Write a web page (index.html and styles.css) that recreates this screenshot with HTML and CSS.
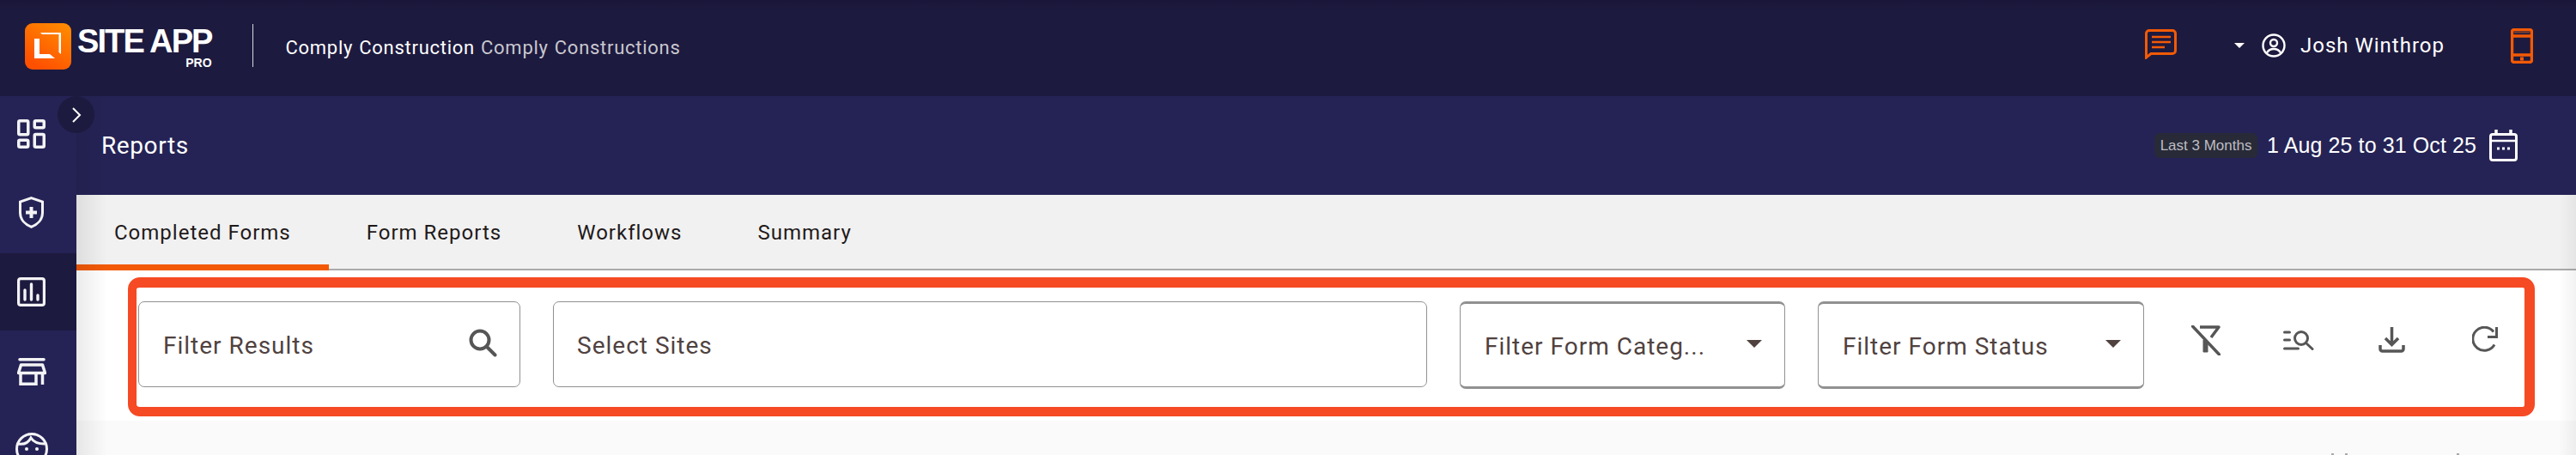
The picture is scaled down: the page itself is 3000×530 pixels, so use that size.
FILE: index.html
```html
<!DOCTYPE html>
<html lang="en">
<head>
<meta charset="utf-8">
<title>Reports</title>
<link rel="stylesheet" href="styles.css">
</head>
<body>
<header class="topbar">
  <div class="logo">
    <svg class="logo-mark" viewBox="0 0 54 54">
      <defs><linearGradient id="lg" x1="1" y1="0" x2="0.4" y2="1"><stop offset="0" stop-color="#ff8f00"/><stop offset="1" stop-color="#ff5000"/></linearGradient></defs>
      <rect width="54" height="54" rx="9" fill="url(#lg)"/>
      <path d="M11 18h6v18h12l6 5H11z" fill="#fff"/>
      <path d="M18 11h24v25l-2.500-2V13H20z" fill="#fff"/>
    </svg>
    <div class="logo-text"><span class="logo-name">SITE APP</span><span class="logo-pro">PRO</span></div>
  </div>
  <div class="divider"></div>
  <div class="company"><span class="company-main">Comply Construction</span> <span class="company-sub">Comply Constructions</span></div>
  <div class="top-right">
    <svg class="ic-chat" viewBox="0 0 37 35" fill="none" stroke="#f25a06"><path d="M5 1.500h27a3.500 3.500 0 0 1 3.500 3.500v20a3.500 3.500 0 0 1-3.500 3.500H7L1.500 33V5A3.500 3.500 0 0 1 5 1.500z" stroke-width="3"/><path d="M8 9h22M8 15h22M8 21h15" stroke-width="2.500"/></svg>
    <span class="caret-white"></span>
    <svg class="ic-user" viewBox="0 0 28 28" fill="none" stroke="#fff" stroke-width="2.400"><circle cx="14" cy="14" r="12.500"/><circle cx="14" cy="11" r="4"/><path d="M6 22.500c2-3.500 5-4.500 8-4.500s6 1 8 4.500"/></svg>
    <span class="user-name">Josh Winthrop</span>
    <svg class="ic-phone" viewBox="0 0 26 41" fill="none" stroke="#f25a06"><rect x="1.500" y="1.500" width="23" height="38" rx="2.500" stroke-width="3.500"/><path d="M2 9h22M2 31h22" stroke-width="3.500"/><path d="M4 4.500h18" stroke="#7a4030" stroke-width="2"/><rect x="11" y="33.500" width="4" height="4" fill="#f25a06" stroke="none"/></svg>
  </div>
</header>
<div class="body-row">
  <nav class="sidebar">
    <div class="side-item side-first">
      <svg class="ic-side" viewBox="0 0 33 34" fill="none" stroke="#f3f3f5" stroke-width="3.500"><rect x="1.750" y="1.750" width="11" height="16" rx="1.500"/><rect x="20.250" y="1.750" width="11" height="8" rx="1.500"/><rect x="1.750" y="24.250" width="11" height="8" rx="1.500"/><rect x="20.250" y="17.500" width="11" height="14.750" rx="1.500"/></svg>
    </div>
    <div class="side-item">
      <svg class="ic-shield" viewBox="0 0 29 37" fill="none" stroke="#f3f3f5" stroke-width="3"><path d="M14.500 1.700 27.500 6v13c0 7.500-5.500 13.500-13 16.300C7 32.500 1.500 26.500 1.500 19V6z"/><path d="M14.500 12v13M8 18.500h13" stroke-width="4"/></svg>
    </div>
    <div class="side-item side-active">
      <svg class="ic-side" viewBox="0 0 33 34" fill="none" stroke="#f3f3f5" stroke-width="3.200"><rect x="1.600" y="1.600" width="29.800" height="30.800" rx="2.500"/><path d="M9 15v11M16.500 8v18M24 21v5" stroke-width="3.400" stroke-linecap="round"/></svg>
    </div>
    <div class="side-item">
      <svg class="ic-store" viewBox="0 0 34 32" fill="none" stroke="#f3f3f5" stroke-width="3.500"><path d="M3 1.750h28" stroke-linecap="round"/><path d="M4.500 8h25l3 9.500h-31z" stroke-linejoin="round"/><path d="M4 18v12.250h18V18M29.500 18v13"/></svg>
    </div>
    <div class="side-item">
      <svg class="ic-face" viewBox="0 0 38 38" fill="none" stroke="#f3f3f5" stroke-width="3"><circle cx="19" cy="19" r="17.500"/><path d="M3 13c6 1 12-1 15-7 3 5 8 7 16 7"/><circle cx="13" cy="19" r="2" fill="#f3f3f5" stroke="none"/><circle cx="25" cy="19" r="2" fill="#f3f3f5" stroke="none"/></svg>
    </div>
  </nav>
  <main class="content">
    <button class="expand" type="button" aria-label="Expand"><svg viewBox="0 0 12 20" fill="none" stroke="#fff" stroke-width="2"><path d="M2 2l8 8-8 8"/></svg></button>
    <section class="subbar">
      <h1 class="page-title">Reports</h1>
      <div class="range">
        <span class="badge">Last 3 Months</span>
        <span class="dates">1 Aug 25 to 31 Oct 25</span>
        <svg class="ic-cal" viewBox="0 0 33 37" fill="none" stroke="#fff" stroke-width="3"><rect x="1.500" y="5.500" width="30" height="30" rx="2.500"/><path d="M2 13h29" stroke-width="2.500"/><path d="M8 0v5M25 0v5" stroke-width="3.500"/><path d="M9 22h3M15 22h3M21 22h3" stroke-width="3"/></svg>
      </div>
    </section>
    <section class="tabs">
      <div class="tab tab-active">Completed Forms</div>
      <div class="tab">Form Reports</div>
      <div class="tab">Workflows</div>
      <div class="tab">Summary</div>
    </section>
    <section class="filter-band">
      <div class="filter-box">
        <div class="control c-search"><span>Filter Results</span>
          <svg class="ic-search" viewBox="0 0 33 33" fill="none" stroke="#565656"><circle cx="13" cy="13" r="10.500" stroke-width="4"/><path d="M20.500 20.500l10 10" stroke-width="4" stroke-linecap="round"/></svg>
        </div>
        <div class="control c-sites"><span>Select Sites</span></div>
        <div class="control c-select c-cat"><span>Filter Form Categ...</span><i class="caret"></i></div>
        <div class="control c-select c-status"><span>Filter Form Status</span><i class="caret"></i></div>
        <div class="actions">
          <svg class="act-filter" viewBox="0 0 34 35" fill="none" stroke="#565656"><path d="M10 2h22l-9 12" stroke-width="3.500" stroke-linejoin="round"/><path d="M14 17v14h5v-9z" fill="#565656" stroke-width="1"/><path d="M1.500 1l31 33" stroke-width="3.500" stroke-linecap="round"/></svg>
          <svg class="act-list" viewBox="0 0 36 24" fill="none" stroke="#565656" stroke-width="3" stroke-linecap="round"><path d="M1.500 3h6M1.500 12h6M1.500 22h16"/><circle cx="21" cy="10" r="7.500"/><path d="M26.500 15.500l7.500 7"/></svg>
          <svg class="act-down" viewBox="0 0 31 31" fill="none" stroke="#565656" stroke-width="3.500"><path d="M15.500 1v20M8 14l7.500 7.500L23 14"/><path d="M2 22v4.500a2.500 2.500 0 0 0 2.500 2.500h22a2.500 2.500 0 0 0 2.500-2.500V22"/></svg>
          <svg class="act-refresh" viewBox="0 0 30 31" fill="none" stroke="#565656" stroke-width="3"><path d="M26 21.500A13.500 13.500 0 1 1 25 6.500"/><path d="M28.500 1v11.500H18"/></svg>
        </div>
      </div>
    </section>
    <section class="below"><i class="tick t1"></i><i class="tick t2"></i><i class="tick t3"></i></section>
  </main>
</div>
</body>
</html>
```
FILE: styles.css
```css
* { box-sizing: border-box; }
html, body { margin: 0; padding: 0; }
body {
  width: 3000px;
  height: 530px;
  overflow: hidden;
  font-family: Roboto, "Noto Sans", sans-serif;
  background: #fafafa;
}
.topbar {
  height: 112px;
  display: flex;
  align-items: center;
  padding: 0 50px 6px 29px;
  background: linear-gradient(#19163a 0, #1d1a3f 12px);
  color: #fff;
}
.logo { display: flex; gap: 7px; align-items: flex-start; margin-top: 2px; }
.logo-mark { width: 54px; height: 54px; display: block; }
.logo-text { display: flex; flex-direction: column; align-items: flex-end; margin-top: 5px; }
.logo-name {
  font: bold 38px/32px "Liberation Sans", sans-serif;
  letter-spacing: -1.900px;
}
.logo-pro { font: 14px/14px "Liberation Sans", sans-serif; font-weight: bold; margin-top: 2px; }
.divider { width: 1px; height: 50px; background: #d8d8e0; margin-left: 47px; }
.company { margin-left: 38px; font-size: 22px; margin-top: 4px; letter-spacing: .72px; word-spacing: 1px; }
.company-main { color: #fff; }
.company-sub { color: #c9c8cf; }
.top-right { margin-left: auto; display: flex; align-items: center; }
.ic-chat { width: 37px; height: 35px; margin-top: -4px; }
.caret-white {
  width: 0; height: 0; margin-left: 67px;
  border-left: 6px solid transparent; border-right: 6px solid transparent; border-top: 6px solid #fff;
}
.ic-user { width: 28px; height: 28px; margin-left: 20px; }
.user-name { margin-left: 17px; font-size: 24px; letter-spacing: 1px; width: 245px; }
.ic-phone { width: 26px; height: 41px; }

.body-row { display: flex; height: 418px; }
.sidebar {
  width: 89px; flex: none; height: 418px; overflow: hidden;
  background: #252355;
  display: flex; flex-direction: column; gap: 2.500px;
}
.side-item { height: 90px; flex: none; display: flex; align-items: center; justify-content: center; }
.side-first { height: 88px; }
.side-active { background: #1d1a3f; }
.ic-side { width: 33px; height: 34px; margin-left: -16px; }
.ic-shield { width: 29px; height: 37px; margin-left: -16px; }
.ic-store { width: 34px; height: 32px; margin-left: -15px; }
.ic-face { width: 38px; height: 38px; margin-left: -15px; margin-top: -4px; }

.content { position: relative; flex: 1; min-width: 0; }
.content::before {
  content: ""; position: absolute; left: 0; top: 0; bottom: 0; width: 36px; z-index: 1;
  background: linear-gradient(90deg, rgba(0,0,0,.08), rgba(0,0,0,0));
  pointer-events: none;
}
.content::after {
  content: ""; position: absolute; right: 0; top: 115px; bottom: 0; width: 20px; z-index: 1;
  background: linear-gradient(270deg, rgba(0,0,0,.05), rgba(0,0,0,0));
  pointer-events: none;
}
.expand {
  position: absolute; left: -22px; top: 0; width: 43px; height: 43px; z-index: 2;
  border: 0; border-radius: 50%; padding: 0;
  background: #1d1a3f;
  display: flex; align-items: center; justify-content: center;
}
.expand svg { width: 12px; height: 20px; display: block; }
.subbar {
  height: 115px;
  background: #252355;
  display: flex; align-items: center;
  padding: 0 68px 0 29px;
  color: #fff;
}
.page-title { margin: 0; font-size: 28px; font-weight: 400; letter-spacing: .6px; }
.range { margin-left: auto; display: flex; align-items: center; font-family: "Liberation Sans", Arial, sans-serif; }
.badge {
  width: 120px; height: 29px; border-radius: 6px; background: #282a38; color: #bdbdc2;
  font-size: 17px; line-height: 29px; text-align: center; white-space: nowrap;
}
.dates { margin-left: 11px; font-size: 25px; letter-spacing: .1px; }
.ic-cal { width: 33px; height: 37px; margin-left: 15px; }

.tabs {
  height: 88px; display: flex;
  background: #f1f1f1;
  border-bottom: 2px solid #aaa;
}
.tab {
  display: flex; align-items: center;
  height: 88px; padding: 7px 44px 0; flex: none;
  border-bottom: 7px solid transparent;
  font-size: 24px; letter-spacing: 1px; color: #1f1a1a;
}
.tab-active { border-bottom-color: #f25a06; }
.filter-band { height: 175px; background: #fff; padding: 8px 48px 0 60px; }
.filter-box {
  height: 162px;
  border-style: solid; border-color: #f54a24;
  border-width: 12px 12px 11px 10px;
  border-radius: 14px;
  padding: 16px 0 0 2px;
  display: flex; align-items: flex-start; gap: 38px;
  background: #fff;
}
.control {
  height: 100px; display: flex; align-items: center; flex: none;
  border: 1.500px solid #919191; border-radius: 7px;
  padding: 2px 26px 0 28px;
  font-size: 28px; letter-spacing: 1px; color: #50423f;
  white-space: nowrap;
}
.c-search { width: 445px; justify-content: space-between; padding-left: 28px; }
.c-search svg { margin-top: -6px; }
.c-sites { width: 1018px; padding-left: 27px; }
.c-select { height: 102px; justify-content: space-between; border-top-width: 3px; border-bottom-width: 3px; }
.c-cat { width: 379px; }
.c-status { width: 380px; }
.caret {
  width: 0; height: 0; margin-top: -6px;
  border-left: 9px solid transparent; border-right: 9px solid transparent; border-top: 9px solid #50423f;
}
.ic-search { width: 33px; height: 33px; }
.actions { display: flex; align-items: flex-start; margin-left: 17px; padding-top: 28px; }
.actions svg { display: block; flex: none; }
.act-filter { width: 34px; height: 35px; }
.act-list { width: 36px; height: 24px; margin: 5px 0 0 73px; }
.act-down { width: 31px; height: 31px; margin: 1px 0 0 75px; }
.act-refresh { width: 30px; height: 31px; margin: 1px 0 0 78px; }
.below { height: 40px; display: flex; padding-top: 38px; }
.tick { display: block; width: 3px; height: 2px; background: #aaa; }
.t1 { margin-left: 2626px; }
.t2 { margin-left: 13px; }
.t3 { margin-left: 127px; }
```
